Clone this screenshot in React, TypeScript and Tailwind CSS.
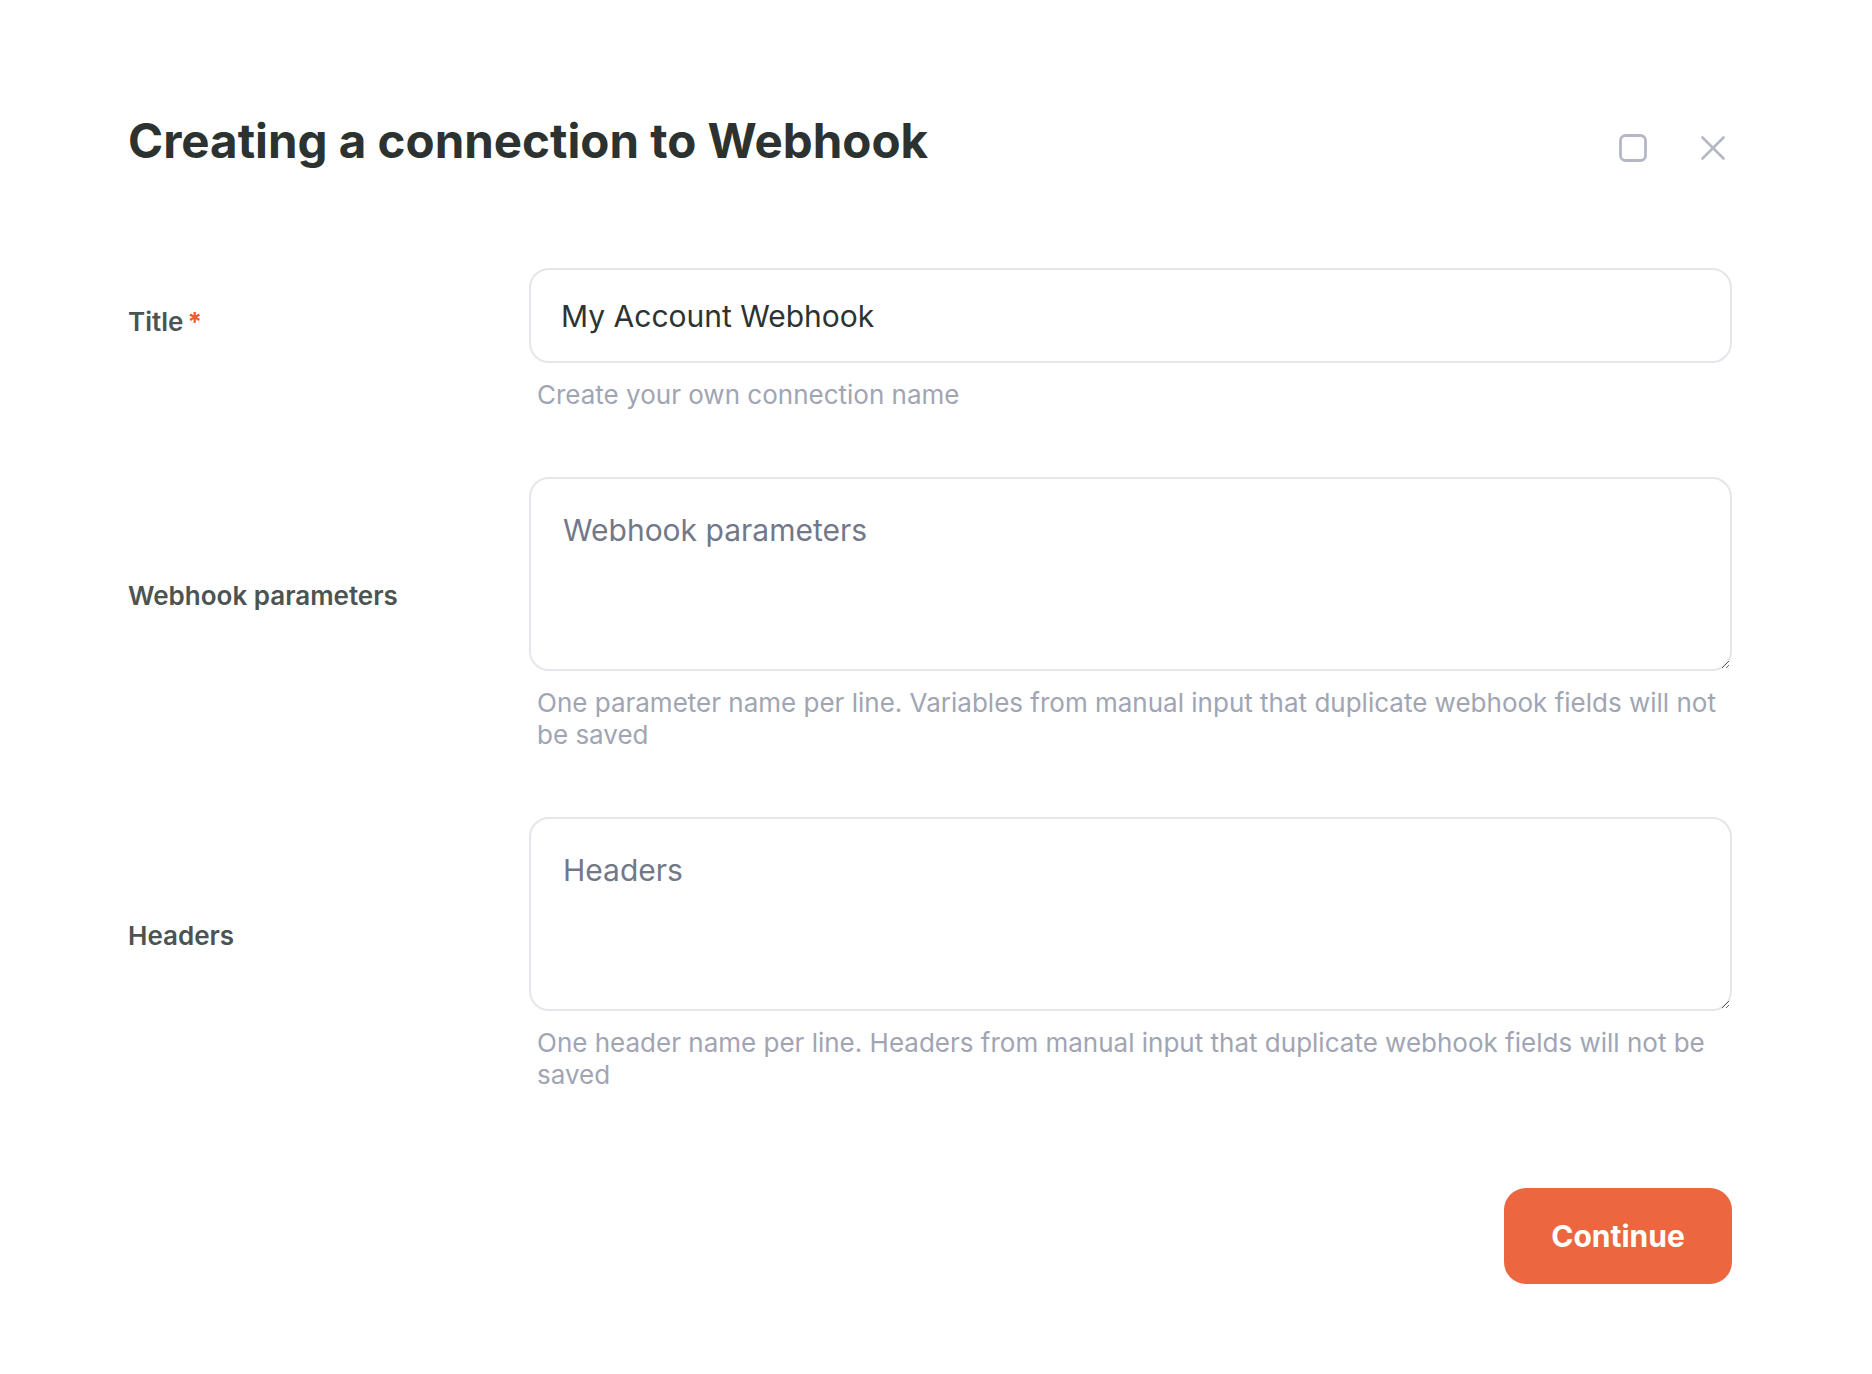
import React from "react";

// One labelled row of the form: label on the left, control + hint on the right
function FieldRow({
  label,
  required,
  hint,
  children,
}: {
  label: string;
  required?: boolean;
  hint: string;
  children: React.ReactNode;
}) {
  return (
    <div className="flex items-center">
      <div className="w-[401px] shrink-0 pb-[36px]">
        <span className="text-[26px] font-semibold leading-[32px] text-[#4b5452]">
          {label}
        </span>
        {required && (
          <span className="ml-[4px] text-[26px] font-bold leading-[32px] text-[#ee5b2c]">
            *
          </span>
        )}
      </div>
      <div className="flex-1">
        {children}
        <p className="mt-4 pl-[8px] pr-[6px] text-[26px] leading-[32px] text-[#a1a5b3]">
          {hint}
        </p>
      </div>
    </div>
  );
}

export default function App() {
  return (
    <div
      className="min-h-screen bg-white pl-[128px] pr-[140px]"
      style={{ fontFamily: "Inter, 'Noto Sans', sans-serif" }}
    >
      {/* Header */}
      <div className="flex items-start justify-between pt-[117px]">
        <h1 className="text-[47.5px] font-bold leading-[48px] text-[#2c3230]">
          Creating a connection to Webhook
        </h1>
        <div className="mt-[17px] flex items-center gap-[54px] pr-[7px]">
          <svg width="28" height="28" viewBox="0 0 28 28" fill="none">
            <rect
              x="1.5"
              y="1.5"
              width="25"
              height="25"
              rx="5"
              stroke="#b4b8c5"
              strokeWidth="2.8"
            />
          </svg>
          <svg width="24" height="24" viewBox="0 0 24 24" fill="none">
            <path
              d="M1.5 1.5L22.5 22.5M22.5 1.5L1.5 22.5"
              stroke="#b4b8c5"
              strokeWidth="2.6"
              strokeLinecap="round"
            />
          </svg>
        </div>
      </div>

      {/* Form */}
      <div className="mt-[103px] flex flex-col gap-[66px]">
        <FieldRow label="Title" required hint="Create your own connection name">
          <input
            defaultValue="My Account Webhook"
            className="h-[95px] w-full rounded-[20px] border-2 border-[#e5e6eb] bg-white px-[30px] text-[30px] text-[#2d3331] outline-none"
          />
        </FieldRow>

        <FieldRow
          label="Webhook parameters"
          hint="One parameter name per line. Variables from manual input that duplicate webhook fields will not be saved"
        >
          <textarea
            placeholder="Webhook parameters"
            className="block h-[194px] w-full rounded-[20px] border-2 border-[#e5e6eb] bg-white px-[32px] pt-[32px] text-[30px] leading-[38px] text-[#2d3331] outline-none placeholder:text-[#727888]"
          />
        </FieldRow>

        <FieldRow
          label="Headers"
          hint="One header name per line. Headers from manual input that duplicate webhook fields will not be saved"
        >
          <textarea
            placeholder="Headers"
            className="block h-[194px] w-full rounded-[20px] border-2 border-[#e5e6eb] bg-white px-[32px] pt-[32px] text-[30px] leading-[38px] text-[#2d3331] outline-none placeholder:text-[#727888]"
          />
        </FieldRow>
      </div>

      {/* Footer */}
      <div className="mt-[97px] flex justify-end">
        <button className="h-[96px] w-[228px] rounded-[22px] bg-[#ec6740] text-[30px] font-bold text-white">
          Continue
        </button>
      </div>
    </div>
  );
}
